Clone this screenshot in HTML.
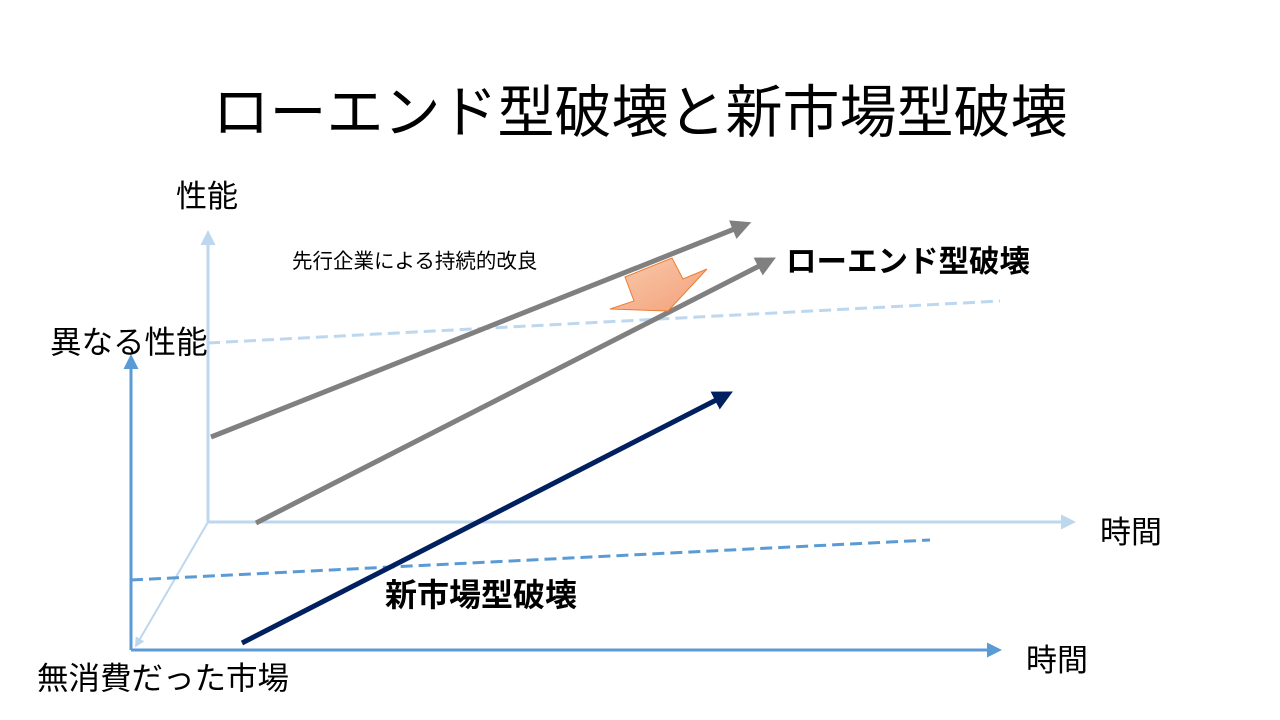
<!DOCTYPE html>
<html><head><meta charset="utf-8"><style>
body{margin:0;width:1280px;height:720px;background:#fff;overflow:hidden;font-family:"Liberation Sans","Noto Sans CJK JP",sans-serif;}
</style></head><body>
<svg width="1280" height="720" xmlns="http://www.w3.org/2000/svg" style="position:absolute;left:0;top:0">
<defs>
<marker id="ag" markerWidth="4" markerHeight="4" refX="2" refY="2" orient="auto" markerUnits="strokeWidth"><path d="M0,0 L4,2 L0,4 z" fill="#808080"/></marker>
<marker id="an" markerWidth="4" markerHeight="4" refX="2" refY="2" orient="auto" markerUnits="strokeWidth"><path d="M0,0 L4,2 L0,4 z" fill="#002060"/></marker>
<marker id="al" markerWidth="5" markerHeight="5" refX="3" refY="2.5" orient="auto" markerUnits="strokeWidth"><path d="M0,0 L5,2.5 L0,5 z" fill="#bdd7ee"/></marker>
<marker id="ab" markerWidth="5" markerHeight="5" refX="3" refY="2.5" orient="auto" markerUnits="strokeWidth"><path d="M0,0 L5,2.5 L0,5 z" fill="#5b9bd5"/></marker>
<linearGradient id="og" x1="0" y1="0" x2="1" y2="1"><stop offset="0" stop-color="#f8cbad"/><stop offset="1" stop-color="#f4a07a"/></linearGradient>
</defs>
<line x1="208" y1="522" x2="208" y2="236" stroke="#bdd7ee" stroke-width="3" marker-end="url(#al)"/>
<line x1="208" y1="522" x2="1070" y2="522" stroke="#bdd7ee" stroke-width="3" marker-end="url(#al)"/>
<line x1="208" y1="522" x2="137" y2="644" stroke="#bdd7ee" stroke-width="2" marker-end="url(#al)"/>
<line x1="208" y1="343" x2="1000" y2="301" stroke="#bdd7ee" stroke-width="3" stroke-dasharray="12,6"/>
<line x1="131" y1="650" x2="131" y2="360" stroke="#5b9bd5" stroke-width="3" marker-end="url(#ab)"/>
<line x1="131" y1="650" x2="996" y2="650" stroke="#5b9bd5" stroke-width="3" marker-end="url(#ab)"/>
<line x1="131" y1="580" x2="930" y2="540" stroke="#5b9bd5" stroke-width="3" stroke-dasharray="12,6"/>
<line x1="211" y1="437" x2="742" y2="226" stroke="#808080" stroke-width="5" marker-end="url(#ag)"/>
<line x1="256" y1="523" x2="767" y2="262" stroke="#808080" stroke-width="5" marker-end="url(#ag)"/>
<line x1="242" y1="643" x2="724" y2="396" stroke="#002060" stroke-width="5" marker-end="url(#an)"/>
<polygon points="625,277 672,258 683,279 707,269 668,311 610,309 634,301" fill="url(#og)" stroke="#ed7d31" stroke-width="1"/>
<text x="640" y="132" font-size="57" text-anchor="middle">ローエンド型破壊と新市場型破壊</text>
<text x="176" y="207" font-size="31">性能</text>
<text x="292" y="268" font-size="20.5">先行企業による持続的改良</text>
<text x="786" y="272" font-size="30.5" font-weight="bold">ローエンド型破壊</text>
<text x="50" y="353" font-size="31.5">異なる性能</text>
<text x="1100" y="543" font-size="31">時間</text>
<text x="385" y="606" font-size="32" font-weight="bold">新市場型破壊</text>
<text x="1026" y="671" font-size="31">時間</text>
<text x="37" y="689" font-size="31.5">無消費だった市場</text>
</svg>
</body></html>
